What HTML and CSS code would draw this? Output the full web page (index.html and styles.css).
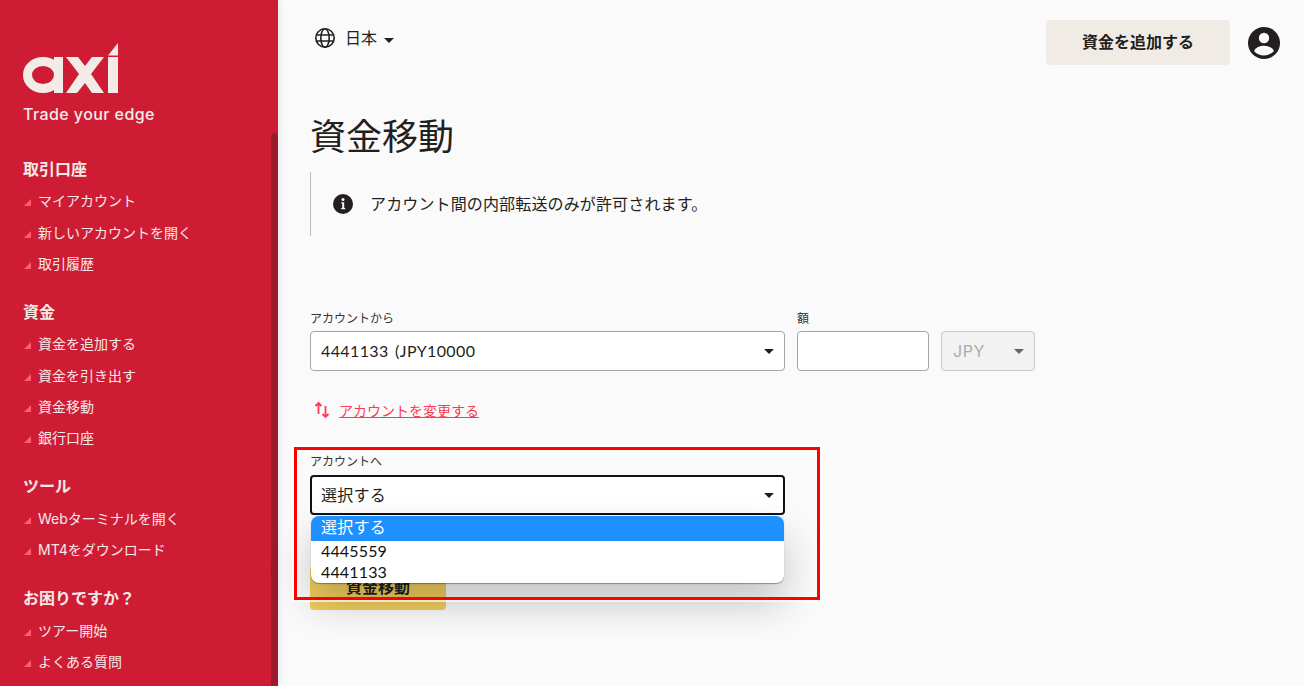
FILE: index.html
```html
<!DOCTYPE html>
<html lang="ja">
<head>
<meta charset="utf-8">
<title>資金移動</title>
<link rel="stylesheet" href="styles.css">
</head>
<body>
<div class="app">
  <aside class="sidebar">
    <div class="brand">
      <svg class="logo" width="96" height="52" viewBox="0 0 96 52" aria-label="axi">
        <ellipse cx="20" cy="32" rx="15.500" ry="13.500" fill="none" stroke="#f3ebe8" stroke-width="9"/>
        <rect x="31" y="14" width="9" height="36" fill="#f3ebe8"/>
        <path d="M43 14h12l7 9 7-9h12L68 31l13 19H69l-7-10-8 10H43l13-19z" fill="#f3ebe8"/>
        <path d="M85 14h10v36H85zM85 12.500 95 0v12.500z" fill="#f3ebe8"/>
      </svg>
      <div class="tagline">Trade your edge</div>
    </div>
    <nav class="menu">
      <section class="group">
        <h2>取引口座</h2>
        <a>マイアカウント</a>
        <a>新しいアカウントを開く</a>
        <a>取引履歴</a>
      </section>
      <section class="group">
        <h2>資金</h2>
        <a>資金を追加する</a>
        <a>資金を引き出す</a>
        <a>資金移動</a>
        <a>銀行口座</a>
      </section>
      <section class="group">
        <h2>ツール</h2>
        <a>Webターミナルを開く</a>
        <a>MT4をダウンロード</a>
      </section>
      <section class="group">
        <h2>お困りですか？</h2>
        <a>ツアー開始</a>
        <a>よくある質問</a>
      </section>
    </nav>
    <div class="thumb"></div>
  </aside>

  <main class="main">
    <header class="topbar">
      <div class="lang">
        <svg width="22" height="22" viewBox="0 0 22 22" fill="none" stroke="#231f20" stroke-width="1.600">
          <circle cx="11" cy="11" r="9.200"/>
          <ellipse cx="11" cy="11" rx="4.200" ry="9.200"/>
          <path d="M2.200 8h17.600M2.200 14h17.600"/>
        </svg>
        <span>日本</span>
        <i class="caret"></i>
      </div>
      <div class="actions">
        <button class="add" type="button">資金を追加する</button>
        <svg width="32" height="32" viewBox="0 0 32 32">
          <circle cx="16" cy="16" r="16" fill="#231f20"/>
          <circle cx="16" cy="11" r="5.200" fill="#fafafa"/>
          <path d="M6 24c1.800-3.600 5.800-5.200 10-5.200s8.200 1.600 10 5.200c-2.400 2.800-6 4.500-10 4.500s-7.600-1.700-10-4.500z" fill="#fafafa"/>
        </svg>
      </div>
    </header>

    <h1>資金移動</h1>

    <div class="notice">
      <svg width="20" height="20" viewBox="0 0 20 20">
        <circle cx="10" cy="10" r="10" fill="#231f20"/>
        <circle cx="10" cy="5.600" r="1.500" fill="#fafafa"/>
        <path d="M8.300 8.300h2.900v5.600h1v1.300H8.200v-1.300h1v-4.300h-.9z" fill="#fafafa"/>
      </svg>
      <p>アカウント間の内部転送のみが許可されます。</p>
    </div>

    <form class="form">
      <div class="row">
        <div class="field from">
          <label>アカウントから</label>
          <div class="select numeric">4441133 (JPY10000<i class="caret"></i></div>
        </div>
        <div class="field amount">
          <label>額</label>
          <input class="input" type="text">
        </div>
        <div class="field currency">
          <label>&nbsp;</label>
          <div class="select disabled">JPY<i class="caret"></i></div>
        </div>
      </div>

      <a class="switch">
        <svg width="16" height="18" viewBox="0 0 16 18" fill="none" stroke="#fb3b55" stroke-width="1.800">
          <path d="M4.500 13V2M1.500 5l3-3 3 3"/>
          <path d="M11.500 5v11M8.500 13l3 3 3-3"/>
        </svg>
        <span>アカウントを変更する</span>
      </a>

      <div class="field to">
        <label>アカウントへ</label>
        <div class="select focus">選択する<i class="caret"></i></div>
        <ul class="options">
          <li class="active">選択する</li>
          <li>4445559</li>
          <li>4441133</li>
        </ul>
      </div>

      <button class="submit" type="button">資金移動</button>
    </form>
    <div class="highlight"></div>
  </main>
</div>
</body>
</html>
```

FILE: styles.css
```css
* { box-sizing: border-box; }
html, body { margin: 0; height: 100%; overflow: hidden; }
body {
  font-family: Inter, "Noto Sans CJK JP", sans-serif;
  color: #231f20;
  background: #fafafa;
}
.app { display: flex; height: 686px; }

/* sidebar */
.sidebar {
  position: relative;
  flex: 0 0 278px;
  height: 686px;
  overflow: hidden;
  padding: 43px 0 0 23px;
  background: #ce1c35;
  color: #f5e9e6;
  box-shadow: 3px 0 6px rgba(0,0,0,.05);
}
.logo { display: block; }
.tagline {
  margin-top: 8px;
  font-size: 16px;
  line-height: 22px;
  font-weight: 500;
  letter-spacing: .42px;
  color: #f3ebe8;
}
.menu { margin-top: 30px; }
.group { margin-bottom: 19.100px; }
.group h2 {
  margin: 0 0 2.400px;
  font-size: 16px;
  line-height: 28px;
  font-weight: 700;
}
.group a {
  position: relative;
  display: block;
  padding-left: 15px;
  font-size: 14px;
  line-height: 31.200px;
  height: 31.200px;
}
.group a::before {
  content: "";
  position: absolute;
  left: 1px;
  top: 14px;
  width: 0;
  height: 0;
  border-left: 7px solid transparent;
  border-bottom: 7px solid #ff6068;
}
.thumb {
  position: absolute;
  right: 0;
  top: 133px;
  bottom: 0;
  width: 7px;
  background: #9c1a2e;
  border-radius: 4px 4px 0 0;
}

/* main */
.main { position: relative; flex: 1; padding: 0 24px 0 32px; }
.topbar {
  display: flex;
  justify-content: space-between;
  align-items: flex-start;
  padding-top: 20px;
}
.lang {
  display: flex;
  align-items: center;
  gap: 9px;
  margin: 6px 0 0 4px;
  font-size: 16px;
  line-height: 22px;
}
.lang span { padding-top: 1px; }
.lang .caret { margin: 6px 0 0 -2px; }
.caret {
  display: inline-block;
  width: 0;
  height: 0;
  border-left: 5px solid transparent;
  border-right: 5px solid transparent;
  border-top: 5px solid #231f20;
}
.actions { display: flex; align-items: center; gap: 18px; }
.add {
  width: 184px;
  height: 45px;
  padding: 0 0 3px;
  border: 0;
  border-radius: 4px;
  background: #f0ebe4;
  color: #231f20;
  font: 700 16px Inter, "Noto Sans CJK JP", sans-serif;
}
h1 {
  margin: 44px 0 0;
  font-size: 36px;
  line-height: 56px;
  font-weight: 400;
}
.notice {
  display: flex;
  align-items: center;
  gap: 17px;
  height: 64px;
  margin-top: 7px;
  padding-left: 22px;
  border-left: 1px solid #bbb;
}
.notice p { margin: 0 0 2px; font-size: 16px; letter-spacing: .14px; }

/* form */
.form { margin-top: 72px; }
.row { display: flex; gap: 12px; }
.field label {
  display: block;
  font-size: 12px;
  line-height: 22px;
  height: 23px;
  color: #333;
}
.from { width: 475px; }
.amount { width: 132px; }
.currency { width: 94px; }
.to { position: relative; width: 475px; margin-top: 35px; }
.to label { height: 21px; line-height: 16px; }
.select {
  display: flex;
  justify-content: space-between;
  align-items: center;
  height: 40px;
  padding: 0 10px 0 10px;
  background: #fff;
  border: 1px solid #a5a5a5;
  border-radius: 4px;
  font-size: 16px;
  letter-spacing: .22px;
}
.select.numeric {
  padding-bottom: 2px;
  font-family: Lato, sans-serif;
  letter-spacing: .38px;
  word-spacing: 2px;
}
.select .caret { margin-top: 1px; }
.select.numeric .caret { margin-top: 3px; }
.select.disabled {
  padding-left: 11px;
  background: #f2f2f2;
  border-color: #c8c8c8;
  color: #aaa;
  letter-spacing: .6px;
}
.select.disabled .caret { border-top-color: #666; }
.select.focus { border: 2px solid #111; padding: 0 9px 2px 9px; }
.select.focus .caret { margin-top: 3px; }
.input {
  display: block;
  width: 100%;
  height: 40px;
  background: #fff;
  border: 1px solid #a5a5a5;
  border-radius: 4px;
}
.switch {
  display: flex;
  align-items: center;
  gap: 9px;
  margin: 30px 0 0 4px;
  height: 18px;
  font-size: 14px;
  color: #fb3b55;
}
.switch span { text-decoration: underline; }
.options {
  position: absolute;
  z-index: 2;
  left: 1px;
  right: 1px;
  top: 62px;
  margin: 0;
  padding: 0;
  list-style: none;
  overflow: hidden;
  background: #fff;
  border-radius: 8px;
  font-family: Lato, sans-serif;
  font-size: 16px;
  letter-spacing: .15px;
  box-shadow: 0 1px 1px rgba(0,0,0,.35), 0 20px 40px rgba(0,0,0,.22);
}
.options li {
  height: 21px;
  line-height: 19px;
  padding-left: 10px;
  color: #111;
}
.options .active {
  height: 25px;
  line-height: 22px;
  font-family: Inter, "Noto Sans CJK JP", sans-serif;
  letter-spacing: .22px;
  background: #1e90ff;
  color: #fff;
}
.submit {
  display: block;
  width: 136px;
  height: 44px;
  margin-top: 51px;
  padding: 0 0 4px;
  border: 0;
  border-radius: 4px;
  background: #f0cd5d;
  color: #231f20;
  font: 700 16px Inter, "Noto Sans CJK JP", sans-serif;
}
.highlight {
  position: absolute;
  z-index: 3;
  left: 16px;
  top: 447px;
  width: 526px;
  height: 153px;
  border: 3px solid #f00;
  box-shadow: 0 0 0 2px rgba(255,255,255,.7);
  pointer-events: none;
}
```
